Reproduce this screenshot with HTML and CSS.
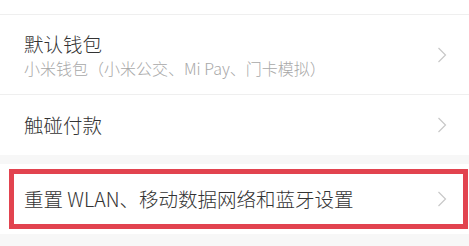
FILE: index.html
```html
<!DOCTYPE html>
<html lang="zh">
<head>
<meta charset="utf-8">
<link rel="stylesheet" href="styles.css">
</head>
<body>
<div class="page">
  <div class="group">
    <div class="top-stub"></div>
    <div class="row row-double">
      <div class="texts">
        <div class="title">默认钱包</div>
        <div class="subtitle">小米钱包（小米公交、Mi Pay、门卡模拟）</div>
      </div>
      <svg class="chev" viewBox="0 0 10 16" width="10" height="16"><path d="M1.5 1 L8.5 8 L1.5 15" fill="none" stroke="#c8c8c8" stroke-width="1.2"/></svg>
    </div>
    <div class="row row-single">
      <div class="title">触碰付款</div>
      <svg class="chev" viewBox="0 0 10 16" width="10" height="16"><path d="M1.5 1 L8.5 8 L1.5 15" fill="none" stroke="#c8c8c8" stroke-width="1.2"/></svg>
    </div>
  </div>
  <div class="gap"></div>
  <div class="group">
    <div class="row row-reset">
      <div class="title">重置 WLAN、移动数据网络和蓝牙设置</div>
      <svg class="chev" viewBox="0 0 10 16" width="10" height="16"><path d="M1.5 1 L8.5 8 L1.5 15" fill="none" stroke="#c8c8c8" stroke-width="1.2"/></svg>
      <div class="highlight"></div>
    </div>
  </div>
  <div class="gap"></div>
</div>
</body>
</html>
```
FILE: styles.css
```css
html, body {
  margin: 0;
  padding: 0;
  background: #f7f7f7;
}
.page {
  width: 469px;
  height: 246px;
  overflow: hidden;
  font-family: "Noto Sans CJK SC", "Noto Sans", sans-serif;
  font-weight: 300;
  background: #f7f7f7;
}
.group {
  background: #ffffff;
}
.top-stub {
  height: 14px;
}
.row {
  position: relative;
  display: flex;
  align-items: center;
  justify-content: space-between;
  padding: 0 22px 0 24px;
  box-sizing: border-box;
}
.row-double {
  border-top: 1px solid #efefef;
  border-bottom: 1px solid #efefef;
  height: 81px;
}
.row-single {
  height: 60px;
}
.row-reset {
  height: 70px;
}
.title {
  font-size: 19.5px;
  line-height: 24px;
  color: #333333;
}
.subtitle {
  margin-top: 2px;
  font-size: 16px;
  line-height: 20px;
  color: #a8a8a8;
}
.chev {
  flex: none;
}
.gap {
  height: 9px;
}
.highlight {
  position: absolute;
  left: 9px;
  top: 5px;
  width: 459px;
  height: 60px;
  box-sizing: border-box;
  border: 5px solid #e2434f;
}
```
